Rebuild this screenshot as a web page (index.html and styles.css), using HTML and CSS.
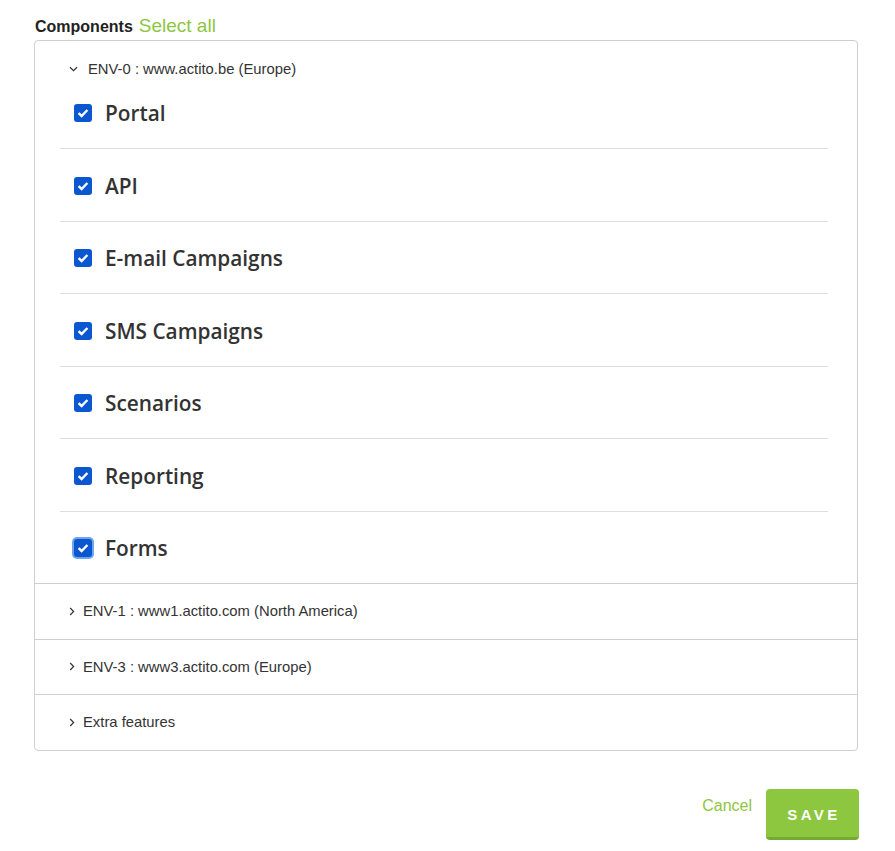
FILE: index.html
```html
<!DOCTYPE html>
<html lang="en">
<head>
    <meta charset="UTF-8">
    <title>Components</title>
    <link rel="stylesheet" href="styles.css">
</head>
<body>

<div class="page">
    <div class="title">
        <span class="title-label">Components</span>
        <a class="select-all">Select all</a>
    </div>

    <div class="panel">
        <div class="env open">
            <div class="env-head">
                <svg class="chev" width="9" height="6" viewBox="0 0 9 6"><path d="M1 1.2 L4.5 4.6 L8 1.2" fill="none" stroke="#333" stroke-width="1.2"/></svg>
                <span>ENV-0 : www.actito.be (Europe)</span>
            </div>
            <ul class="items">
                <li><span class="check"><svg width="12" height="10" viewBox="0 0 12 10"><path d="M1.6 5.2 L4.6 8 L10.4 2" fill="none" stroke="#fff" stroke-width="2.4"/></svg></span>Portal</li>
                <li><span class="check"><svg width="12" height="10" viewBox="0 0 12 10"><path d="M1.6 5.2 L4.6 8 L10.4 2" fill="none" stroke="#fff" stroke-width="2.4"/></svg></span>API</li>
                <li><span class="check"><svg width="12" height="10" viewBox="0 0 12 10"><path d="M1.6 5.2 L4.6 8 L10.4 2" fill="none" stroke="#fff" stroke-width="2.4"/></svg></span>E-mail Campaigns</li>
                <li><span class="check"><svg width="12" height="10" viewBox="0 0 12 10"><path d="M1.6 5.2 L4.6 8 L10.4 2" fill="none" stroke="#fff" stroke-width="2.4"/></svg></span>SMS Campaigns</li>
                <li><span class="check"><svg width="12" height="10" viewBox="0 0 12 10"><path d="M1.6 5.2 L4.6 8 L10.4 2" fill="none" stroke="#fff" stroke-width="2.4"/></svg></span>Scenarios</li>
                <li><span class="check"><svg width="12" height="10" viewBox="0 0 12 10"><path d="M1.6 5.2 L4.6 8 L10.4 2" fill="none" stroke="#fff" stroke-width="2.4"/></svg></span>Reporting</li>
                <li><span class="check focus"><svg width="12" height="10" viewBox="0 0 12 10"><path d="M1.6 5.2 L4.6 8 L10.4 2" fill="none" stroke="#fff" stroke-width="2.4"/></svg></span>Forms</li>
            </ul>
        </div>
        <div class="env">
            <div class="env-head">
                <svg class="chev" width="6" height="9" viewBox="0 0 6 9"><path d="M1.2 1 L4.6 4.5 L1.2 8" fill="none" stroke="#333" stroke-width="1.2"/></svg>
                <span>ENV-1 : www1.actito.com (North America)</span>
            </div>
        </div>
        <div class="env">
            <div class="env-head">
                <svg class="chev" width="6" height="9" viewBox="0 0 6 9"><path d="M1.2 1 L4.6 4.5 L1.2 8" fill="none" stroke="#333" stroke-width="1.2"/></svg>
                <span>ENV-3 : www3.actito.com (Europe)</span>
            </div>
        </div>
        <div class="env">
            <div class="env-head">
                <svg class="chev" width="6" height="9" viewBox="0 0 6 9"><path d="M1.2 1 L4.6 4.5 L1.2 8" fill="none" stroke="#333" stroke-width="1.2"/></svg>
                <span>Extra features</span>
            </div>
        </div>
    </div>

    <div class="actions">
        <a class="cancel">Cancel</a>
        <button class="save">SAVE</button>
    </div>
</div>

</body>
</html>
```

FILE: styles.css
```css
body {
    margin: 0;
    font-family: "Liberation Sans", Arial, sans-serif;
    color: #333;
    background-color: #fff;
}

.page {
    width: 824px;
    padding: 14px 0 0 34px;
}

.title {
    display: flex;
    align-items: baseline;
    gap: 6px;
    padding-left: 1px;
    height: 26px;
    padding-top: 1px;
    margin-bottom: -1px;
}

.title-label {
    font-size: 16px;
    font-weight: bold;
    color: #222;
}

.select-all {
    font-size: 19px;
    color: #8dc63f;
    cursor: pointer;
}

.panel {
    border: 1px solid #cfcfcf;
    border-radius: 4px;
}

.env {
    border-top: 1px solid #cfcfcf;
}

.env:first-child {
    border-top: none;
}

.env-head {
    display: flex;
    align-items: center;
    height: 54.5px;
    padding-left: 34px;
    font-size: 14.8px;
    color: #333;
}

.env-head .chev {
    margin-right: 8px;
}

.env.open .env-head {
    height: 15.5px;
    padding-top: 20px;
}

.env.open .env-head .chev {
    margin-right: 10px;
}

.items {
    list-style: none;
    margin: 0 29px 0 25px;
    padding: 0;
}

.items li {
    display: flex;
    align-items: center;
    height: 69.5px;
    padding: 2px 0 0 14px;
    border-top: 1px solid #dedede;
    font-family: "Open Sans", "Noto Sans", sans-serif;
    font-size: 20.8px;
    font-weight: 600;
    color: #333;
}

.items li:first-child {
    border-top: none;
}

.check {
    display: flex;
    align-items: center;
    justify-content: center;
    width: 18px;
    height: 18px;
    margin-right: 13px;
    border-radius: 3px;
    background-color: #0b57d0;
}

.check.focus {
    box-shadow: 0 0 0 2px #6fa4f2;
}

.actions {
    display: flex;
    justify-content: flex-end;
    align-items: center;
    gap: 14px;
    margin-top: 38px;
    margin-right: -1px;
}

.cancel {
    font-size: 16px;
    color: #8dc63f;
    cursor: pointer;
    margin-top: -17px;
}

.save {
    width: 93px;
    height: 51px;
    background-color: #8dc63f;
    border: none;
    border-bottom: 3px solid #76a933;
    border-radius: 4px;
    color: #fff;
    font-family: "Liberation Sans", Arial, sans-serif;
    font-size: 15px;
    font-weight: bold;
    letter-spacing: 3.4px;
    padding: 4px 0 0 3px;
    cursor: pointer;
}
```
